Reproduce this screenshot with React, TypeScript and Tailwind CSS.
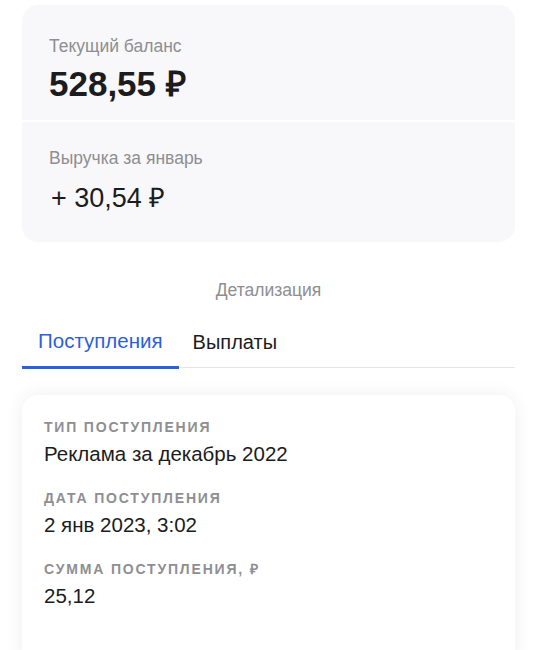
const font = { fontFamily: '"Liberation Sans", Arial, sans-serif' };

function Field({ label, value }: { label: string; value: string }) {
  return (
    <div className="flex flex-col gap-[6px]">
      <p className="text-[14px] font-bold uppercase leading-[18px] tracking-[0.13em] text-[#8e8e93]">{label}</p>
      <p className="text-[20.5px] leading-[24px] text-[#1c1c1e]">{value}</p>
    </div>
  );
}

export default function App() {
  return (
    <div className="min-h-[650px] overflow-hidden bg-white px-[22px] pt-[5px]" style={font}>
      <div className="flex flex-col gap-[2px] overflow-hidden rounded-[16px]">
        <div className="bg-[#f8f8fa] px-[27px] pb-[16px] pt-[31px]">
          <p className="text-[17.5px] leading-[20px] text-[#8e8e93]">Текущий баланс</p>
          <p className="mt-[8px] text-[35px] font-bold leading-[40px] text-[#1c1c1e]">528,55 ₽</p>
        </div>
        <div className="bg-[#f8f8fa] px-[27px] pb-[28px] pt-[26px]">
          <p className="text-[17.5px] leading-[20px] text-[#8e8e93]">Выручка за январь</p>
          <p className="mt-[14px] pl-[2px] text-[27px] leading-[32px] text-[#1c1c1e]">+ 30,54 ₽</p>
        </div>
      </div>

      <p className="mt-[38px] text-center text-[17.5px] leading-[20px] text-[#8e8e93]">Детализация</p>

      <div className="mt-[29px] flex border-b border-[#e5e5ea]">
        <button
          className="-mb-[2px] border-b-[3px] border-[#2c5fdb] px-4 pb-[13px] text-[20.5px] leading-[24px] text-[#2c5fdb]"
          type="button"
        >
          Поступления
        </button>
        <button className="px-[14px] pb-[13px] text-[20px] leading-[24px] text-[#1c1c1e]" type="button">
          Выплаты
        </button>
      </div>

      <div className="mt-[27px] flex flex-col gap-[23px] rounded-[16px] bg-white px-[22px] pb-[60px] pt-[23px] shadow-[0_0_18px_rgba(0,0,0,0.07)]">
        <Field label="Тип поступления" value="Реклама за декабрь 2022" />
        <Field label="Дата поступления" value="2 янв 2023, 3:02" />
        <Field label="Сумма поступления, ₽" value="25,12" />
      </div>
    </div>
  );
}
